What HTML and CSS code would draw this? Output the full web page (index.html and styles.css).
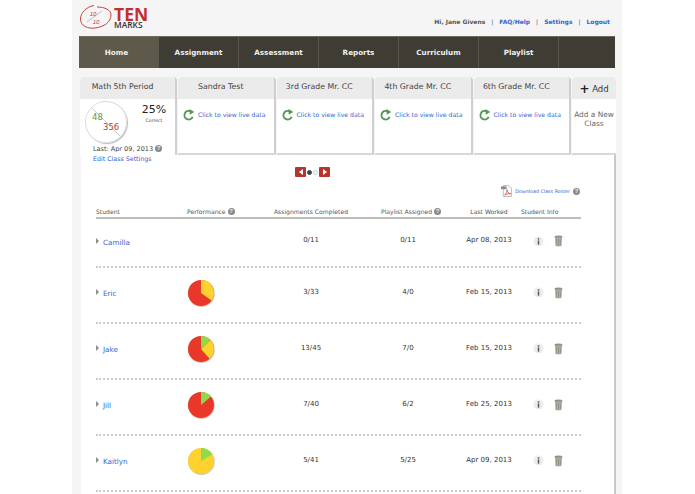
FILE: index.html
```html
<!DOCTYPE html>
<html lang="en">
<head>
<meta charset="utf-8">
<title>TenMarks</title>
<link rel="stylesheet" href="styles.css">
</head>
<body>
<svg class="defs" width="0" height="0" aria-hidden="true">
  <symbol id="reload" viewBox="0 0 14 14"><path d="M11.300 9.200A5 5 0 1 1 8.600 2.600" fill="none" stroke="#4f9a52" stroke-width="2.200"/><path d="M7.600 0 13.200 3.400 7.800 6.600Z" fill="#4f9a52"/></symbol>
  <symbol id="info" viewBox="0 0 12 12"><circle cx="6" cy="6" r="5.500" fill="#ececec"/><rect x="5.200" y="2.400" width="1.600" height="1.600" fill="#555"/><rect x="5.200" y="4.800" width="1.600" height="4.600" fill="#555"/></symbol>
  <symbol id="trash" viewBox="0 0 10 13"><ellipse cx="5" cy="2" rx="4.400" ry="1.600" fill="#94948a"/><path d="M1 2.800h8l-.6 9.200q-3.400 1-6.800 0Z" fill="#b2b2a8"/><path d="M3 4v7.500M5 4v8M7 4v7.500" stroke="#8a8a80" stroke-width=".8"/></symbol>
  <symbol id="pie-eric" viewBox="0 0 28 28"><circle cx="14.400" cy="14.600" r="13.400" fill="#cfc8b4"/><circle cx="14" cy="14" r="13" fill="#e9382a"/><path d="M14 14V1A13 13 0 0 1 24.600 21.500Z" fill="#fdd22e"/></symbol>
  <symbol id="pie-jake" viewBox="0 0 28 28"><circle cx="14.400" cy="14.600" r="13.400" fill="#cfc8b4"/><circle cx="14" cy="14" r="13" fill="#e9382a"/><path d="M14 14 23.500 5.100A13 13 0 0 1 22.600 23.700Z" fill="#fdd22e"/><path d="M14 14V1A13 13 0 0 1 23.500 5.100Z" fill="#8fdc4a"/></symbol>
  <symbol id="pie-jill" viewBox="0 0 28 28"><circle cx="14.400" cy="14.600" r="13.400" fill="#e5c4bb"/><circle cx="14" cy="14" r="13" fill="#e9382a"/><path d="M14 14V1A13 13 0 0 1 24 5.600Z" fill="#8fdc4a"/></symbol>
  <symbol id="pie-kaitlyn" viewBox="0 0 28 28"><circle cx="14.400" cy="14.600" r="13.400" fill="#cfc8b4"/><circle cx="14" cy="14" r="13" fill="#fdd22e"/><path d="M14 14V1A13 13 0 0 1 25.300 7.500Z" fill="#8fdc4a"/></symbol>
</svg>
<div class="page">
  <header class="top">
    <div class="logo">
      <svg class="logo-mark" viewBox="0 0 32 26" width="32" height="26">
        <path d="M14 1.500C6 3 .5 9 .5 15C.5 22 8 25 15 24C24 23 31 18 31 11C31 6 25 3 17 3" fill="none" stroke="#c9413f" stroke-width="1"/>
        <path d="M7 18 22 7" stroke="#999" stroke-width=".6"/>
        <text x="13" y="12" class="logo-frac">10</text>
        <text x="16" y="20" class="logo-frac">10</text>
      </svg>
      <div class="logo-words">
        <span class="logo-ten">TEN</span>
        <span class="logo-marks">MARKS</span>
      </div>
    </div>
    <div class="account">
      <span>Hi, Jane Givens</span><i>|</i>
      <a href="#">FAQ/Help</a><i>|</i>
      <a href="#">Settings</a><i>|</i>
      <a href="#">Logout</a>
    </div>
  </header>

  <nav class="nav">
    <a class="nav-item active" href="#">Home</a>
    <a class="nav-item" href="#">Assignment</a>
    <a class="nav-item" href="#">Assessment</a>
    <a class="nav-item" href="#">Reports</a>
    <a class="nav-item" href="#">Curriculum</a>
    <a class="nav-item" href="#">Playlist</a>
  </nav>

  <div class="tabs">
    <div class="tab tab-active">
      <div class="tab-head">Math 5th Period</div>
      <div class="tab-body">
        <div class="score">
          <div class="dial">
            <span class="dial-good">48</span>
            <span class="dial-bad">356</span>
          </div>
          <div class="pct"><b>25%</b><small>Correct</small></div>
        </div>
        <div class="last">Last: Apr 09, 2013 <span class="help">?</span></div>
      </div>
    </div>
    <div class="tab w97">
      <div class="tab-head">Sandra Test</div>
      <div class="tab-body"><a class="live" href="#"><svg class="reload"><use href="#reload"/></svg>Click to view live data</a></div>
    </div>
    <div class="tab w97">
      <div class="tab-head">3rd Grade Mr. CC</div>
      <div class="tab-body"><a class="live" href="#"><svg class="reload"><use href="#reload"/></svg>Click to view live data</a></div>
    </div>
    <div class="tab w97">
      <div class="tab-head">4th Grade Mr. CC</div>
      <div class="tab-body"><a class="live" href="#"><svg class="reload"><use href="#reload"/></svg>Click to view live data</a></div>
    </div>
    <div class="tab w97">
      <div class="tab-head">6th Grade Mr. CC</div>
      <div class="tab-body"><a class="live" href="#"><svg class="reload"><use href="#reload"/></svg>Click to view live data</a></div>
    </div>
    <div class="tab tab-add">
      <div class="tab-head add-head"><span class="plus">+</span> Add</div>
      <div class="tab-body add-body">Add a New Class</div>
    </div>
  </div>

  <main class="panel">
    <a class="edit" href="#">Edit Class Settings</a>
    <div class="pager">
      <span class="arrow"><span class="tri-left"></span></span>
      <span class="dot on"></span>
      <span class="dot"></span>
      <span class="arrow"><span class="tri-right"></span></span>
    </div>
    <div class="download">
      <svg class="pdf" viewBox="0 0 12 13" width="11" height="12">
        <path d="M2.500.5H8.500L11.500 3.500V12.500H2.500Z" fill="#fafafa" stroke="#aaa" stroke-width=".8"/>
        <rect x="0" y="1.500" width="6" height="3" fill="#8a8a8a"/>
        <path d="M4 11C6 9 7 6.500 6.500 5C6.500 7.500 8.500 9.500 10.500 9.500C8 9 5.500 10 4 11Z" fill="none" stroke="#d0473c" stroke-width=".8"/>
      </svg>
      <a href="#">Download Class Roster</a>
      <span class="help">?</span>
    </div>
    <div class="table">
      <div class="row head">
        <span>Student</span>
        <span>Performance <span class="help">?</span></span>
        <span class="c">Assignments Completed</span>
        <span class="c head-playlist">Playlist Assigned <span class="help">?</span></span>
        <span class="c">Last Worked</span>
        <span class="info-head">Student Info</span>
      </div>
      <div class="row first">
        <a class="name" href="#">Camilla</a><span></span>
        <span class="c val">0/11</span><span class="c val">0/11</span><span class="c val">Apr 08, 2013</span>
        <span class="acts"><svg class="info"><use href="#info"/></svg><svg class="trash"><use href="#trash"/></svg></span>
      </div>
      <div class="row">
        <a class="name" href="#">Eric</a><svg class="pie"><use href="#pie-eric"/></svg>
        <span class="c val">3/33</span><span class="c val">4/0</span><span class="c val">Feb 15, 2013</span>
        <span class="acts"><svg class="info"><use href="#info"/></svg><svg class="trash"><use href="#trash"/></svg></span>
      </div>
      <div class="row">
        <a class="name" href="#">Jake</a><svg class="pie"><use href="#pie-jake"/></svg>
        <span class="c val">13/45</span><span class="c val">7/0</span><span class="c val">Feb 15, 2013</span>
        <span class="acts"><svg class="info"><use href="#info"/></svg><svg class="trash"><use href="#trash"/></svg></span>
      </div>
      <div class="row">
        <a class="name" href="#">Jill</a><svg class="pie"><use href="#pie-jill"/></svg>
        <span class="c val">7/40</span><span class="c val">6/2</span><span class="c val">Feb 25, 2013</span>
        <span class="acts"><svg class="info"><use href="#info"/></svg><svg class="trash"><use href="#trash"/></svg></span>
      </div>
      <div class="row">
        <a class="name" href="#">Kaitlyn</a><svg class="pie"><use href="#pie-kaitlyn"/></svg>
        <span class="c val">5/41</span><span class="c val">5/25</span><span class="c val">Apr 09, 2013</span>
        <span class="acts"><svg class="info"><use href="#info"/></svg><svg class="trash"><use href="#trash"/></svg></span>
      </div>
    </div>
  </main>
</div>
</body>
</html>
```
FILE: styles.css
```css
* { box-sizing: border-box; }
html, body { margin: 0; height: 100%; overflow: hidden; }
body { background: #fff; font-family: "DejaVu Sans", Verdana, sans-serif; color: #444; }
a { text-decoration: none; color: #3366d0; }
.defs { position: absolute; }
.page { width: 550px; height: 494px; margin-left: 72px; padding: 0 7px; background: #f5f5f5; overflow: hidden; }

.top { height: 36px; display: flex; justify-content: space-between; padding-left: 1px; }
.logo { display: flex; align-items: flex-start; padding-top: 4px; gap: 2px; }
.logo-frac { font: 6px "Liberation Sans", sans-serif; fill: #b94040; text-anchor: middle; font-style: italic; }
.logo-words { display: flex; flex-direction: column; padding-top: 3px; }
.logo-ten { font: 700 17.500px/14px "Liberation Sans Narrow", "Open Sans", sans-serif; color: #c0322f; }
.logo-marks { font: 600 8.400px/7px "Open Sans", sans-serif; color: #333; }
.account { padding: 18px 5px 0 0; font-size: 6px; line-height: 8px; font-weight: 700; display: flex; height: 30px; }
.account i { font-style: normal; font-weight: 400; margin: 0 6px; color: #555; }
.account span { color: #555; }

.nav { height: 32px; display: flex; background: #3e3c33; border-top: 1px solid #6b6a60; padding-right: 55px; }
.nav-item { width: 80px; display: flex; align-items: center; justify-content: center; color: #eee; font-size: 7.200px; font-weight: 700; border-right: 1px solid #55534a; padding-bottom: 1px; }
.nav-item.active { background: #5d5a4c; border-right: 0; padding: 0 5px 0 0; }

.tabs { display: flex; margin: 9px 0 0 1px; height: 78px; gap: 1px; }
.tab { flex: none; background: #fff; border-radius: 4px 4px 0 0; border-right: 2px solid #cfcfcf; display: flex; flex-direction: column; }
.w97 { width: 97.500px; border-bottom: 2px solid #d8d8d8; }
.tab-active { width: 97px; }
.tab-add { width: 44px; border-bottom: 2px solid #d8d8d8; border-right: 0; }
.tab-head { height: 22px; flex: none; background: #ebebeb; font-size: 7.800px; line-height: 20px; text-align: center; padding-right: 10px; color: #444; border-radius: 4px 4px 0 0; white-space: nowrap; }
.tab-body { flex: 1; }
.live { display: flex; align-items: center; font-size: 6.150px; line-height: 12px; gap: 3px; padding: 10px 0 0 5px; white-space: nowrap; }
.reload { width: 12px; height: 12px; flex: none; }

.score { display: flex; padding: 2px 0 0 5px; }
.dial { width: 42px; height: 42px; flex: none; border-radius: 50%; background: linear-gradient(to top right, #fff 49%, #ccc 50%, #fff 51%); border: 1px solid #ddd; box-shadow: 1px 1px 1px #bbb; display: flex; flex-direction: column; font-size: 8.500px; line-height: 10px; padding: 10px 0 0 6px; }
.dial-good { color: #6a9a3c; }
.dial-bad { color: #b8403a; margin-left: 11px; }
.pct { flex: 1; text-align: center; padding: 1px 0 0 6px; }
.pct b { display: block; font-weight: 400; font-size: 11px; line-height: 16px; color: #222; white-space: nowrap; }
.pct small { display: block; font-size: 4.600px; line-height: 6px; }
.last { font-size: 6.500px; line-height: 9px; padding: 2px 0 0 13px; white-space: nowrap; }
.help { display: inline-block; width: 7px; height: 7px; border-radius: 50%; background: #8a8a8a; color: #eee; font: 700 6px/7px "Liberation Sans", sans-serif; text-align: center; vertical-align: top; flex: none; }

.add-head { font-size: 8.500px; font-weight: 400; line-height: 24px; padding: 0; color: #333; }
.plus { font-weight: 700; font-size: 12px; vertical-align: -1px; color: #222; }
.add-body { font-size: 7.400px; line-height: 9px; text-align: center; padding-top: 11px; color: #666; }

.panel { margin-left: 2px; width: 535px; height: 340px; background: #fff; border-right: 2px solid #c8c8c8; position: relative; padding: 0 0 0 15px; }
.edit { display: block; height: 8px; font-size: 6.300px; line-height: 8px; margin-left: -3px; }
.pager { display: flex; align-items: center; margin: 4px 0 0 199px; height: 10px; gap: 1px; }
.arrow { width: 11px; height: 10px; background: #b8352b; border-radius: 1px; display: flex; align-items: center; justify-content: center; }
.tri-left { border: 3px solid transparent; border-left: 0; border-right: 4px solid #fff; }
.tri-right { border: 3px solid transparent; border-right: 0; border-left: 4px solid #fff; }
.dot { width: 5px; height: 5px; border-radius: 50%; border: 1px solid #ccc; }
.dot.on { background: #444; border-color: #444; }

.download { display: flex; justify-content: flex-end; align-items: center; width: 484px; margin-top: 8px; height: 12px; font-size: 4.800px; }
.download a { margin: 1px 3px 0 3px; white-space: nowrap; }
.pdf { flex: none; }

.table { width: 485px; margin-top: 11px; }
.row { display: grid; grid-template-columns: 91px 78px 92px 102px 60px 62px; align-items: center; height: 56px; padding-bottom: 5px; border-bottom: 2px dotted #cdcdcd; }
.row.first { height: 49px; padding-bottom: 3px; }
.row.head { height: 11px; padding: 0 0 1px; border-bottom: 2px solid #bdbdb8; font-size: 6.100px; line-height: 8px; color: #555; white-space: nowrap; }
.c { text-align: center; white-space: nowrap; }
.head-playlist { padding-left: 6px; }
.val { font-size: 7px; color: #333; padding-bottom: 2px; }
.info-head { margin-left: 2px; }
.name { font-size: 7.200px; position: relative; padding: 2px 0 0 7px; }
.name::before { content: ""; position: absolute; left: 0; top: 2px; border: 3.500px solid transparent; border-left: 3.500px solid #8c8c8c; border-right: 0; }
.pie { width: 28px; height: 28px; }
.acts { display: flex; align-items: center; gap: 10px; padding-left: 14px; }
.info { width: 11px; height: 11px; }
.trash { width: 9px; height: 12px; }
```
